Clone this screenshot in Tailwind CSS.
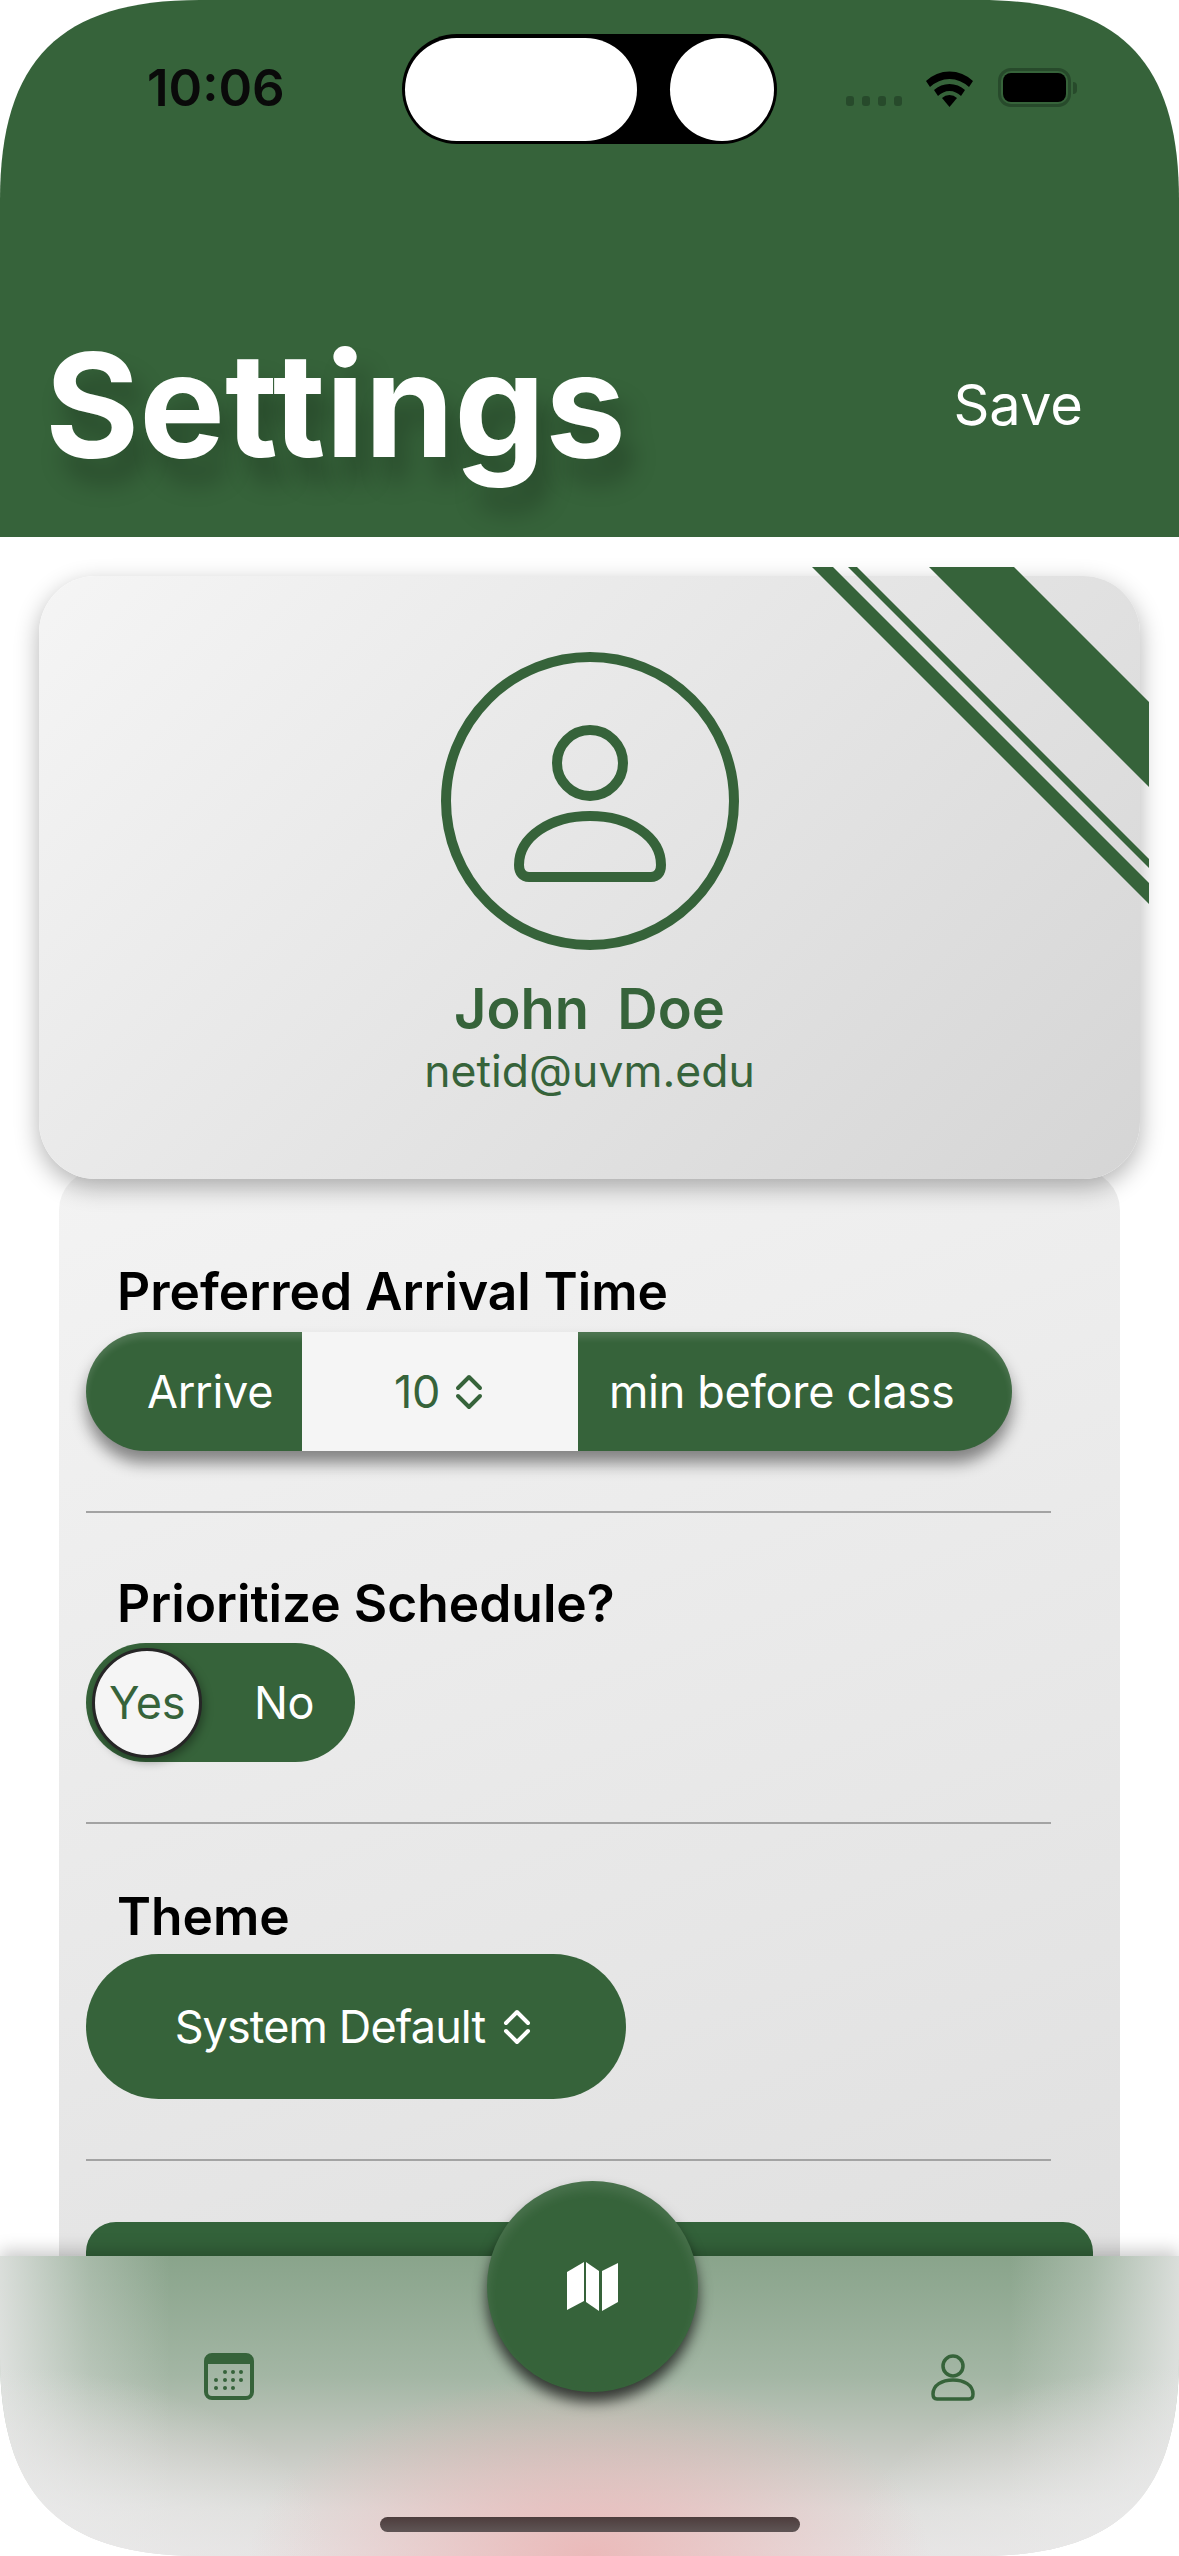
<!DOCTYPE html>
<html lang="en">
<head>
    <meta charset="UTF-8">
    <meta name="viewport" content="width=device-width, initial-scale=1.0">
    <title>Settings</title>
    <script src="https://cdn.jsdelivr.net/npm/@tailwindcss/browser@4"></script>
</head>
<body class="bg-white font-['Inter',sans-serif]">
    <div class="relative w-[1179px] h-[2556px] overflow-hidden bg-white flex flex-col [clip-path:path('M0,200_C0,60_60,0_200,0_H979_C1119,0_1179,60_1179,200_V2356_C1179,2496_1119,2556_979,2556_H200_C60,2556_0,2496_0,2356_Z')]">

        <!-- header -->
        <header class="h-[537px] shrink-0 bg-[#36633a] flex flex-col text-white">
            <div class="h-[330px] flex items-start pt-[60px] pl-[147px] pr-[97px] text-black">
                <span class="text-[51px] leading-[56px] font-semibold text-[#0a0a0a] w-[699px]">10:06</span>
                <div class="flex items-end gap-[8px] pt-[9px] h-[46px]">
                    <span class="w-[8px] h-[10px] rounded-[3px] bg-[#274a2b]"></span>
                    <span class="w-[8px] h-[10px] rounded-[3px] bg-[#274a2b]"></span>
                    <span class="w-[8px] h-[10px] rounded-[3px] bg-[#274a2b]"></span>
                    <span class="w-[8px] h-[10px] rounded-[3px] bg-[#274a2b]"></span>
                </div>
                <svg class="ml-[22px] mt-[9px] shrink-0" width="51" height="38" viewBox="0 0 51 38">
                    <path d="M2 12 A34 34 0 0 1 49 12 L45 18 A28 28 0 0 0 6 18 Z" fill="#000"/>
                    <path d="M10 21 A23 23 0 0 1 41 21 L37 27 A16 16 0 0 0 14 27 Z" fill="#000"/>
                    <path d="M18 29 A11 11 0 0 1 33 29 L25.5 38 Z" fill="#000"/>
                </svg>
                <div class="ml-[23px] mt-[8px] w-[73px] h-[39px] rounded-[13px] border-[3px] border-[#274a2b] p-[2px] shrink-0">
                    <div class="w-full h-full rounded-[8px] bg-black"></div>
                </div>
                <span class="mt-[22px] ml-[2px] w-[4px] h-[12px] rounded-r-full bg-[#274a2b] shrink-0"></span>
            </div>
            <div class="flex items-center justify-between pl-[45px] pr-[96px]">
                <h1 class="text-[144px] leading-[150px] font-bold [text-shadow:12px_24px_24px_rgba(0,0,0,0.25)]">Settings</h1>
                <button class="text-[56px] leading-[64px] font-normal">Save</button>
            </div>
        </header>

        <!-- profile card -->
        <section class="relative z-10 mt-[39px] mx-[39px] w-[1101px] h-[603px] shrink-0 rounded-[57px] bg-[linear-gradient(135deg,#f5f5f5,#d5d5d5)] shadow-[0_8px_24px_rgba(0,0,0,0.3)] flex flex-col items-center">
            <svg class="absolute left-[760px] top-[-9px]" width="350" height="350" viewBox="0 0 350 350">
                <polygon points="13,0 34,0 350,316 350,337" fill="#36633a"/>
                <polygon points="49,0 58,0 350,292 350,301" fill="#36633a"/>
                <polygon points="130,0 215,0 350,135 350,220" fill="#36633a"/>
            </svg>
            <div class="mt-[76px] w-[298px] h-[298px] rounded-full border-[10px] border-[#36633a] flex items-center justify-center">
                <svg width="152" height="164" viewBox="0 0 152 164">
                    <circle cx="76" cy="44" r="33" fill="none" stroke="#36633a" stroke-width="10"/>
                    <path d="M5 146 C5 118 36 97 76 97 C116 97 147 118 147 146 C147 154 143 158 137 158 L15 158 C9 158 5 154 5 146 Z" fill="none" stroke="#36633a" stroke-width="10"/>
                </svg>
            </div>
            <p class="mt-[27px] text-[56px] leading-[64px] font-semibold text-[#36633a] whitespace-pre">John  Doe</p>
            <p class="mt-[4px] text-[44.5px] leading-[52px] text-[#36633a]">netid@uvm.edu</p>
        </section>

        <!-- settings panel -->
        <main class="mt-[-9px] mx-[59px] w-[1061px] flex-1 rounded-[40px] bg-[linear-gradient(160deg,#f3f3f3,#dcdcdc)] pt-[91px] pl-[27px]">
            <div class="w-[965px] h-[252px] border-b-2 border-[#a3a3a3]">
                <h2 class="pl-[31px] text-[51.5px] leading-[60px] font-semibold text-black">Preferred Arrival Time</h2>
                <div class="mt-[11px] w-[926px] h-[119px] rounded-full bg-[#36633a] shadow-[0_12px_16px_rgba(0,0,0,0.45),inset_0_6px_6px_rgba(255,255,255,0.12)] overflow-hidden flex items-center text-[45px] tracking-[-0.3px] text-white">
                    <span class="w-[216px] pl-[61px]">Arrive</span>
                    <div class="w-[276px] h-full bg-[#f5f5f5] flex items-center justify-center gap-[14px] pr-[2px] text-[#36633a]">
                        <span>10</span>
                        <svg width="30" height="36" viewBox="0 0 30 36" fill="none" stroke="#36633a" stroke-width="4" stroke-linecap="round" stroke-linejoin="round"><path d="M4 14 L15 3 L26 14"/><path d="M4 22 L15 33 L26 22"/></svg>
                    </div>
                    <span class="pl-[31px]">min before class</span>
                </div>
            </div>
            <div class="w-[965px] h-[311px] border-b-2 border-[#a3a3a3] pt-[60px]">
                <h2 class="pl-[31px] text-[51.5px] leading-[60px] font-semibold text-black">Prioritize Schedule?</h2>
                <div class="relative mt-[10px] w-[269px] h-[119px] rounded-full bg-[#36633a] flex items-center text-[45px] tracking-[-0.3px] text-white">
                    <div class="ml-[6px] w-[110px] h-[110px] rounded-full bg-[#f5f5f5] border-[3px] border-[#262626] shadow-[2px_4px_10px_rgba(0,0,0,0.35)] flex items-center justify-center text-[#36633a]">Yes</div>
                    <span class="ml-[52px]">No</span>
                </div>
            </div>
            <div class="w-[965px] h-[337px] border-b-2 border-[#a3a3a3] pt-[62px]">
                <h2 class="pl-[31px] text-[51.5px] leading-[60px] font-semibold text-black">Theme</h2>
                <div class="mt-[8px] w-[540px] h-[145px] rounded-full bg-[#36633a] flex items-center justify-center gap-[17px] pr-[5px] text-[45px] tracking-[-0.9px] text-white">
                    <span>System Default</span>
                    <svg width="30" height="36" viewBox="0 0 30 36" fill="none" stroke="#fff" stroke-width="4" stroke-linecap="round" stroke-linejoin="round"><path d="M4 14 L15 3 L26 14"/><path d="M4 22 L15 33 L26 22"/></svg>
                </div>
            </div>
            <div class="mt-[61px] w-[1007px] h-[120px] rounded-[30px] bg-[#33623a]"></div>
        </main>

        <!-- tab bar -->
        <nav class="absolute z-20 left-0 bottom-0 w-full h-[300px] shadow-[0_-6px_16px_rgba(0,0,0,0.2)] bg-[radial-gradient(ellipse_340px_180px_at_50%_100%,rgba(236,175,175,0.8),rgba(236,175,175,0)),radial-gradient(ellipse_330px_190px_at_0%_100%,rgba(234,234,234,0.95),rgba(234,234,234,0)),radial-gradient(ellipse_330px_190px_at_100%_100%,rgba(234,234,234,0.95),rgba(234,234,234,0)),linear-gradient(to_right,rgba(232,232,232,0.85)_0px,rgba(232,232,232,0.3)_90px,rgba(232,232,232,0)_170px,rgba(232,232,232,0)_1010px,rgba(232,232,232,0.3)_1089px,rgba(232,232,232,0.85)_100%),linear-gradient(to_bottom,#89a48b,#a3b6a4_40%,#c6c9c2_65%,#dfdfdd_85%,#e6e4e4_100%)]">
            <svg class="absolute left-[204px] top-[97px]" width="50" height="47" viewBox="0 0 50 47">
                <rect x="2" y="2" width="46" height="43" rx="6" fill="none" stroke="#36633a" stroke-width="4"/>
                <path d="M1 11 V8 A7 7 0 0 1 8 1 H42 A7 7 0 0 1 49 8 V11 Z" fill="#36633a"/>
                <g fill="#36633a">
                    <circle cx="21" cy="19" r="2"/><circle cx="29" cy="19" r="2"/><circle cx="37" cy="19" r="2"/>
                    <circle cx="12" cy="27" r="2"/><circle cx="21" cy="27" r="2"/><circle cx="29" cy="27" r="2"/><circle cx="37" cy="27" r="2"/>
                    <circle cx="12" cy="35" r="2"/><circle cx="21" cy="35" r="2"/><circle cx="29" cy="35" r="2"/>
                </g>
            </svg>
            <svg class="absolute left-[930px] top-[98px]" width="46" height="47" viewBox="0 0 46 47" fill="none" stroke="#36633a" stroke-width="3.5">
                <circle cx="23" cy="12" r="10"/>
                <path d="M3 40 C3 31 12 26 23 26 C34 26 43 31 43 40 C43 43 42 45 39 45 H7 C4 45 3 43 3 40 Z"/>
            </svg>
            <div class="absolute left-[380px] top-[261px] w-[420px] h-[15px] rounded-full bg-[linear-gradient(#4d3d3d,#5f5555)]"></div>
        </nav>

        <!-- map button -->
        <button class="absolute z-30 left-[487px] top-[2181px] w-[211px] h-[211px] rounded-full bg-[#36633a] shadow-[0_10px_14px_rgba(0,0,0,0.7),inset_0_8px_12px_rgba(255,255,255,0.1)] flex items-center justify-center">
            <svg width="54" height="50" viewBox="0 0 54 50" fill="#fff">
                <polygon points="1,10 18,0 18,39 1,48"/>
                <polygon points="20,0 33,9 33,49 20,40"/>
                <polygon points="36,9 52,1 52,40 36,49"/>
            </svg>
        </button>

        <!-- dynamic island -->
        <div class="absolute z-30 left-[402px] top-[34px] w-[375px] h-[110px] rounded-full bg-black flex items-center justify-between px-[3px]">
            <div class="w-[232px] h-[103px] rounded-full bg-white"></div>
            <div class="w-[104px] h-[103px] rounded-full bg-white"></div>
        </div>
    </div>
</body>
</html>
